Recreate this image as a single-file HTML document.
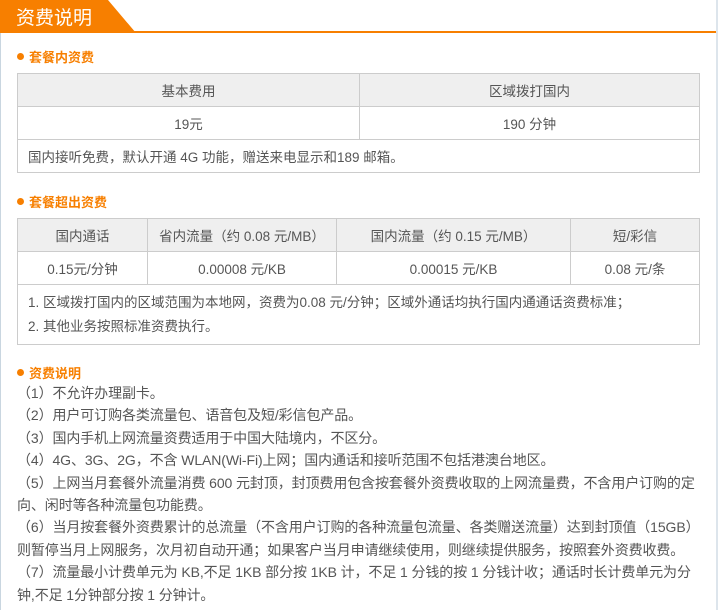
<!DOCTYPE html>
<html><head><meta charset="utf-8"><style>
*{margin:0;padding:0;box-sizing:border-box}
body{width:718px;height:610px;background:#fff;font-family:"Liberation Sans","Noto Sans CJK SC",sans-serif;color:#555;font-size:13px;position:relative;overflow:hidden}
.lb{position:absolute;left:0;top:0;width:1px;height:610px;background:#c9d6e0}
.rb{position:absolute;left:716px;top:0;width:2px;height:610px;background:#dde5ec}
.hline{position:absolute;left:0;top:31px;width:716px;height:2px;background:#f77f00}
.tab{position:absolute;left:0;top:0;width:136px;height:33px;background:#f77f00;clip-path:polygon(0 0,108px 0,136px 33px,0 33px)}
.tab span{position:absolute;left:16px;top:3px;color:#fff;font-size:19px}
.st{position:absolute;left:17px;color:#f77f00;font-weight:bold;font-size:13px}
.st:before{content:"";display:inline-block;width:7px;height:7px;border-radius:50%;background:#f77f00;margin-right:5px;vertical-align:2px}
table{position:absolute;left:17px;width:683px;border-collapse:collapse}
td{border:1px solid #ccc;text-align:center;height:33px;font-size:13.5px;color:#555}
tr.h td{background:#efefef}
td.n{text-align:left;padding-left:10px}
.txt{position:absolute;left:17px;top:382px;width:686px;font-size:14px;line-height:22.4px;color:#555;letter-spacing:-0.1px}
</style></head><body>
<div class="lb"></div><div class="rb"></div>
<div class="hline"></div>
<div class="tab"><span>资费说明</span></div>
<div class="st" style="top:47px">套餐内资费</div>
<table style="top:73px">
<tr class="h"><td style="width:342px">基本费用</td><td>区域拨打国内</td></tr>
<tr><td>19元</td><td>190 分钟</td></tr>
<tr><td colspan="2" class="n">国内接听免费，默认开通 4G 功能，赠送来电显示和189 邮箱。</td></tr>
</table>
<div class="st" style="top:192px">套餐超出资费</div>
<table style="top:218px">
<tr class="h"><td style="width:130px">国内通话</td><td style="width:189px">省内流量（约 0.08 元/MB）</td><td style="width:234px">国内流量（约 0.15 元/MB）</td><td>短/彩信</td></tr>
<tr><td>0.15元/分钟</td><td>0.00008 元/KB</td><td>0.00015 元/KB</td><td>0.08 元/条</td></tr>
<tr><td colspan="4" class="n" style="height:60px;line-height:24px">1. 区域拨打国内的区域范围为本地网，资费为0.08 元/分钟；区域外通话均执行国内通通话资费标准；<br>2. 其他业务按照标准资费执行。</td></tr>
</table>
<div class="st" style="top:363px">资费说明</div>
<div class="txt">（1）不允许办理副卡。<br>（2）用户可订购各类流量包、语音包及短/彩信包产品。<br>（3）国内手机上网流量资费适用于中国大陆境内，不区分。<br>（4）4G、3G、2G，不含 WLAN(Wi-Fi)上网；国内通话和接听范围不包括港澳台地区。<br>（5）上网当月套餐外流量消费 600 元封顶，封顶费用包含按套餐外资费收取的上网流量费，不含用户订购的定<br>向、闲时等各种流量包功能费。<br>（6）当月按套餐外资费累计的总流量（不含用户订购的各种流量包流量、各类赠送流量）达到封顶值（15GB）<br>则暂停当月上网服务，次月初自动开通；如果客户当月申请继续使用，则继续提供服务，按照套外资费收费。<br>（7）流量最小计费单元为 KB,不足 1KB 部分按 1KB 计，不足 1 分钱的按 1 分钱计收；通话时长计费单元为分<br>钟,不足 1分钟部分按 1 分钟计。</div>
</body></html>
